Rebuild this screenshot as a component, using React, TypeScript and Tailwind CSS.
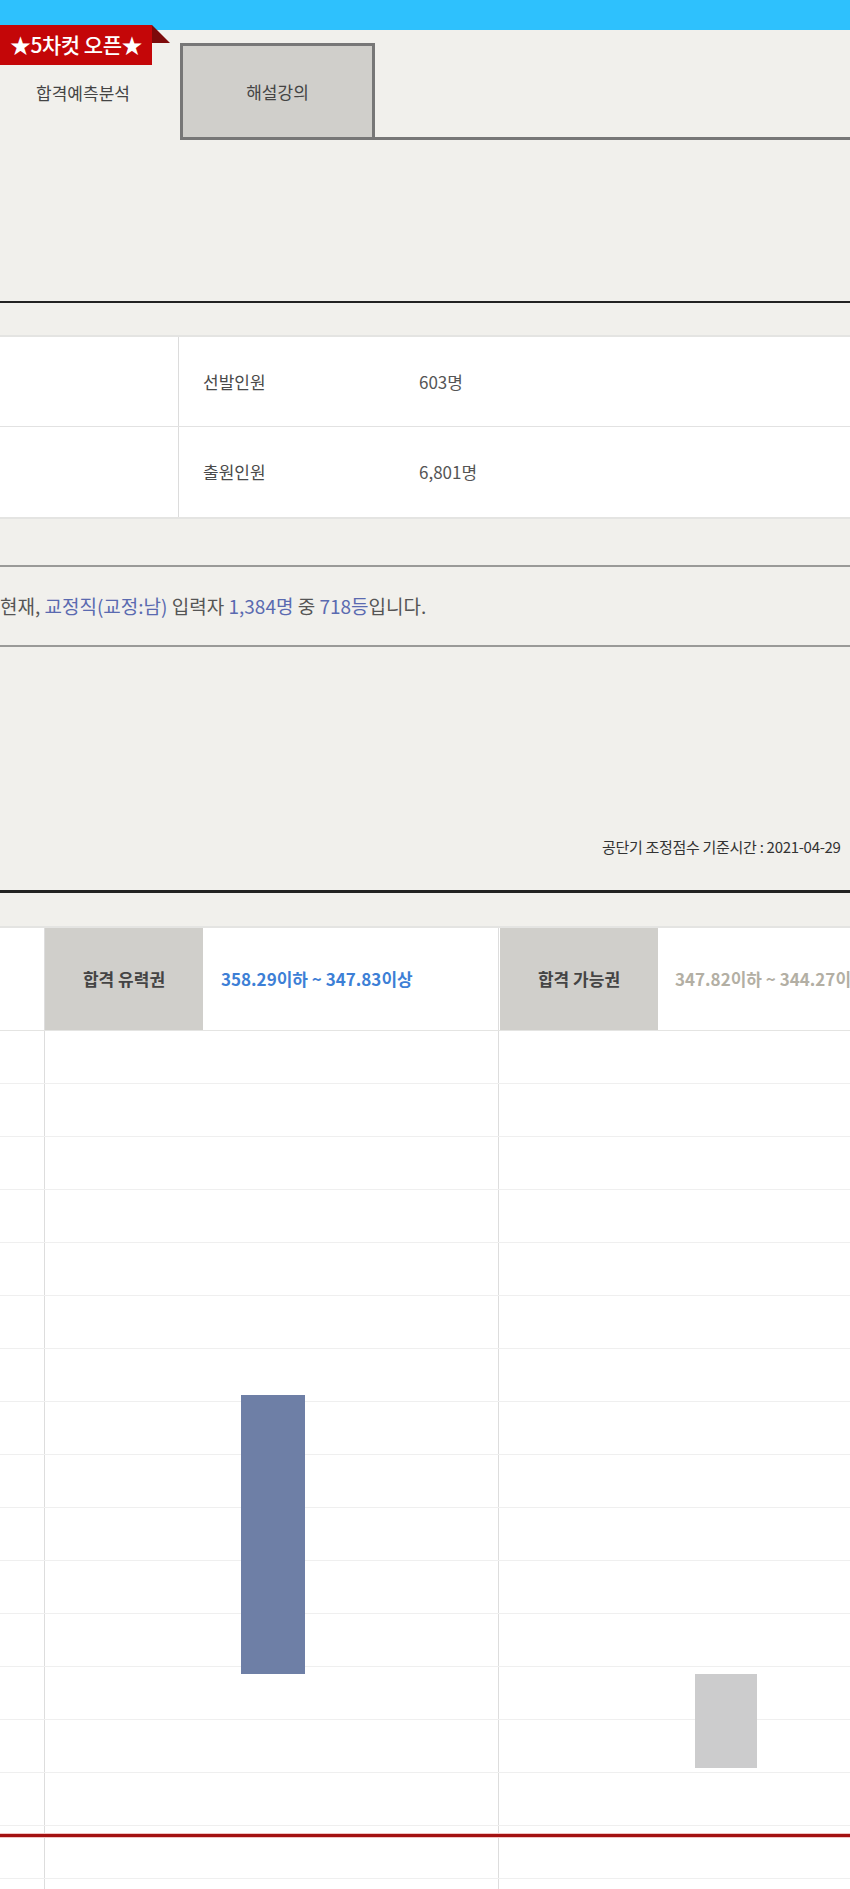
import React from "react";

const FONT = { fontFamily: '"Noto Sans CJK KR", "Noto Sans", sans-serif' };

const ROWS = Array.from({ length: 17 });

function InfoRow({ label, value, last }: { label: string; value: string; last?: boolean }) {
  return (
    <div className={`flex h-[90px] ${last ? "" : "border-b border-[#e2e2e2]"}`}>
      <div className="w-[179px] shrink-0 border-r border-[#dcdcdc]" />
      <div className="flex items-center pl-[24px] w-[240px] shrink-0 text-[17px] text-[#4a4a4a]">{label}</div>
      <div className="flex items-center text-[17px] text-[#555]">{value}</div>
    </div>
  );
}

export default function App() {
  return (
    <div className="w-[850px] h-[1889px] overflow-hidden bg-[#f1f0ec]" style={FONT}>
      {/* top bar */}
      <div className="h-[30px] bg-[#2ec1fd]" />

      {/* tabs */}
      <div className="relative flex items-end pt-[13px]">
        <div className="absolute left-0 top-[-5px] flex">
          <div className="h-[40px] w-[152px] bg-[#c40608] flex items-center justify-center text-white text-[21px] font-medium tracking-[-0.5px] whitespace-nowrap">
            ★5차컷 오픈★
          </div>
          <svg width="18" height="18" viewBox="0 0 18 18" className="block">
            <polygon points="0,0 18,18 0,18" fill="#7d0a0a" />
          </svg>
        </div>
        <div className="w-[180px] shrink-0 h-[97px] flex items-center justify-center pr-[14px] pt-[2px] text-[17px] text-[#444]">
          합격예측분석
        </div>
        <div className="w-[195px] shrink-0 h-[97px] border-[3px] border-[#777] bg-[#d0cfcb] flex items-center justify-center text-[17px] text-[#444]">
          해설강의
        </div>
        <div className="flex-1 border-b-[3px] border-[#777]" />
      </div>

      <div className="h-[161px]" />
      <div className="h-[2px] bg-[#222]" />
      <div className="h-[32px]" />

      {/* info table */}
      <div className="bg-white border-t-2 border-b-2 border-[#e4e4e2]">
        <InfoRow label="선발인원" value="603명" />
        <InfoRow label="출원인원" value="6,801명" last />
      </div>

      <div className="h-[46px]" />

      {/* rank message */}
      <div className="border-t-2 border-b-2 border-[#9a9a98] h-[82px] flex items-center text-[19px] text-[#555] whitespace-nowrap">
        현재,&nbsp;<span className="text-[#5a6ab0]">교정직(교정:남)</span>&nbsp;입력자&nbsp;
        <span className="text-[#5a6ab0]">1,384명</span>&nbsp;중&nbsp;
        <span className="text-[#5a6ab0]">718등</span>입니다.
      </div>

      <div className="h-[187px]" />
      <div className="h-[26px] pl-[602px] whitespace-nowrap text-[15px] text-[#333] tracking-[-0.3px] leading-[26px]">
        공단기 조정점수 기준시간 : 2021-04-29
      </div>
      <div className="h-[30px]" />
      <div className="h-[3px] bg-[#222]" />
      <div className="h-[33px]" />

      {/* chart header */}
      <div className="flex h-[105px] bg-white border-t-2 border-b border-[#e4e4e2] whitespace-nowrap">
        <div className="w-[45px] shrink-0 border-r border-[#dddddd]" />
        <div className="w-[158px] shrink-0 bg-[#d0cfcb] flex items-center justify-center text-[17px] font-bold text-[#444]">
          합격 유력권
        </div>
        <div className="w-[296px] shrink-0 border-r border-[#dddddd] flex items-center pl-[18px] text-[17px] font-bold text-[#3d7fd6]">
          358.29이하 ~ 347.83이상
        </div>
        <div className="w-[158px] shrink-0 ml-[1px] bg-[#d0cfcb] flex items-center justify-center text-[17px] font-bold text-[#444]">
          합격 가능권
        </div>
        <div className="flex items-center pl-[17px] text-[17px] font-bold text-[#b3afa4]">
          347.82이하 ~ 344.27이상
        </div>
      </div>

      {/* chart body */}
      <div className="relative bg-white">
        {ROWS.map((_, i) => (
          <div key={i} className="flex h-[53px] border-b border-[#efefef]">
            <div className="w-[45px] shrink-0 border-r border-[#dddddd]" />
            <div className="w-[454px] shrink-0 border-r border-[#dddddd]" />
          </div>
        ))}
        <div className="absolute left-[241px] top-[364px] w-[64px] h-[279px] bg-[#6e7fa6]" />
        <div className="absolute left-[695px] top-[643px] w-[62px] h-[94px] bg-[#cccccd]" />
        <div className="absolute left-0 right-0 top-[802px] h-[5px] bg-[#f2c4c4] flex items-center">
          <div className="w-full h-[3px] bg-[#a31212]" />
        </div>
      </div>
    </div>
  );
}
